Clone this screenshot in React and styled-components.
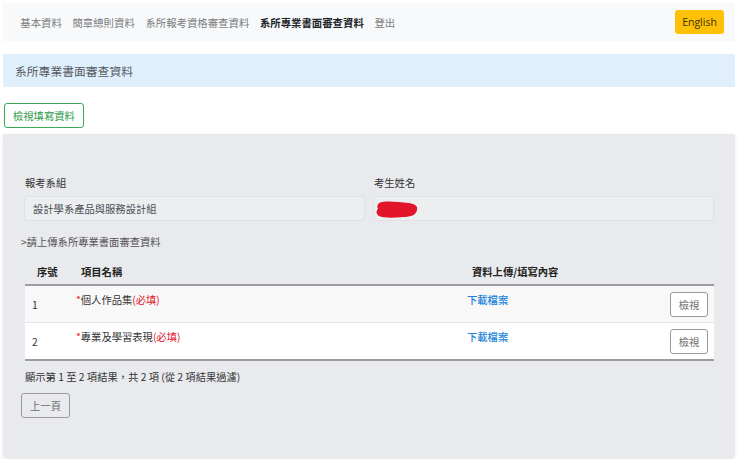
import React from 'react';
import styled, { createGlobalStyle } from 'styled-components';

const GlobalStyle = createGlobalStyle`
    body {
        margin: 0;
        background: #ffffff;
        font-family: 'Noto Sans CJK TC', 'Noto Sans', sans-serif;
        font-size: 10.5px;
        color: #333;
    }
`;

const rows = [
    { no: 1, name: '個人作品集' },
    { no: 2, name: '專業及學習表現' },
];

const navItems = ['基本資料', '簡章總則資料', '系所報考資格審查資料', '系所專業書面審查資料', '登出'];

const App = () => {
    return (
        <Page>
            <GlobalStyle />
            <NavBar>
                <NavLinks>
                    {navItems.map((item, i) => (
                        <NavLink key={item} active={i === 3}>
                            {item}
                        </NavLink>
                    ))}
                </NavLinks>
                <LangBtn>English</LangBtn>
            </NavBar>

            <Alert>系所專業書面審查資料</Alert>

            <OutlineBtn>檢視填寫資料</OutlineBtn>

            <Card>
                <FieldRow>
                    <Field>
                        <Label>報考系組</Label>
                        <ReadOnly>設計學系產品與服務設計組</ReadOnly>
                    </Field>
                    <Field>
                        <Label>考生姓名</Label>
                        <ReadOnly>
                            <svg width="44" height="22" viewBox="0 0 44 22">
                                <path
                                    d="M4 4 C10 1 22 3 34 4 C40 5 43 7 42 11 C41 16 36 18 28 18 C18 19 8 19 4 17 C1 15 1 12 3 10 C2 8 2 6 4 4 Z"
                                    fill="#e3152b"
                                />
                            </svg>
                        </ReadOnly>
                    </Field>
                </FieldRow>

                <Hint>&gt;請上傳系所專業書面審查資料</Hint>

                <Table>
                    <colgroup>
                        <col style={{ width: 44 }} />
                        <col style={{ width: 391 }} />
                        <col style={{ width: 177 }} />
                        <col />
                    </colgroup>
                    <thead>
                        <tr>
                            <Th>序號</Th>
                            <Th>項目名稱</Th>
                            <Th>資料上傳/填寫內容</Th>
                            <Th />
                        </tr>
                    </thead>
                    <tbody>
                        {rows.map((r, i) => (
                            <Tr key={r.no} odd={i % 2 === 0}>
                                <Td>{r.no}</Td>
                                <Td>
                                    <TopText>
                                        <Star>*</Star>
                                        {r.name}
                                        <Required>(必填)</Required>
                                    </TopText>
                                </Td>
                                <Td>
                                    <TopText>
                                        <DownloadLink>下載檔案</DownloadLink>
                                    </TopText>
                                </Td>
                                <Td right>
                                    <SmallBtn>檢視</SmallBtn>
                                </Td>
                            </Tr>
                        ))}
                    </tbody>
                </Table>

                <Summary>顯示第 1 至 2 項結果，共 2 項 (從 2 項結果過濾)</Summary>
                <PageBtn>上一頁</PageBtn>
            </Card>
        </Page>
    );
};

const Page = styled.div`
    padding: 3px 5px 0 3px;
    display: flex;
    flex-direction: column;
    align-items: flex-start;
`;

const NavBar = styled.div`
    width: 100%;
    box-sizing: border-box;
    height: 38px;
    background: #f8f9fa;
    display: flex;
    align-items: center;
    justify-content: space-between;
    padding: 0 11px 0 12px;
`;

const NavLinks = styled.div`
    display: flex;
    align-items: center;
`;

const NavLink = styled.span`
    padding: 0 5.3px;
    font-size: 10.4px;
    color: ${p => (p.active ? '#212529' : '#7a7d80')};
    font-weight: ${p => (p.active ? 700 : 400)};
`;

const LangBtn = styled.button`
    height: 24px;
    width: 49px;
    padding: 0;
    border: none;
    border-radius: 3px;
    background: #ffc107;
    color: #3a3200;
    font-family: 'Open Sans', 'Noto Sans', sans-serif;
    font-size: 10.5px;
`;

const Alert = styled.div`
    margin-top: 13px;
    width: 100%;
    box-sizing: border-box;
    height: 33px;
    background: #e0effc;
    display: flex;
    align-items: center;
    padding-left: 12px;
    font-size: 11.8px;
    color: #555a60;
`;

const OutlineBtn = styled.button`
    margin-top: 16px;
    margin-left: 1px;
    height: 25px;
    padding: 0 8px;
    background: #ffffff;
    border: 1px solid #3aa856;
    border-radius: 3px;
    color: #2f9a4c;
    font-family: inherit;
    font-size: 10.3px;
`;

const Card = styled.div`
    margin-top: 6px;
    width: 100%;
    box-sizing: border-box;
    height: 325px;
    background: #e9eaed;
    border-radius: 0 0 5px 5px;
    box-shadow: 0 2px 4px rgba(0, 0, 0, 0.08);
    padding: 42px 21px 0 21px;
    display: flex;
    flex-direction: column;
    align-items: flex-start;
`;

const FieldRow = styled.div`
    width: 100%;
    display: grid;
    grid-template-columns: 1fr 1fr;
    gap: 8px;
`;

const Field = styled.div`
    display: flex;
    flex-direction: column;
`;

const Label = styled.div`
    font-size: 10.3px;
    color: #333;
    margin-left: 1px;
    line-height: 14px;
    margin-bottom: 6px;
`;

const ReadOnly = styled.div`
    height: 25px;
    box-sizing: border-box;
    border: 1px solid #dfe1e4;
    border-radius: 3px;
    background: #eceef0;
    display: flex;
    align-items: center;
    padding-left: 8px;
    font-size: 10.3px;
    color: #495057;
    svg {
        margin-left: -7px;
        margin-top: 2px;
    }
`;

const Hint = styled.div`
    margin-top: 14px;
    margin-left: -3px;
    font-size: 10.3px;
    color: #555;
    line-height: 14px;
`;

const Table = styled.table`
    margin-top: 10px;
    margin-left: 1px;
    width: 689px;
    border-collapse: collapse;
    table-layout: fixed;
    border-bottom: 2px solid #9c9c9c;
`;

const Th = styled.th`
    height: 25px;
    padding: 0 0 0 12px;
    text-align: left;
    font-size: 10.3px;
    font-weight: 700;
    color: #222;
    border-bottom: 2px solid #9c9c9c;
`;

const Tr = styled.tr`
    background: ${p => (p.odd ? '#f8f8f8' : '#ffffff')};
    border-top: 1px solid #e4e4e4;
`;

const Td = styled.td`
    height: 36px;
    padding: 0 ${p => (p.right ? '6px' : '0')} 0 ${p => (p.right ? '0' : '7px')};
    text-align: ${p => (p.right ? 'right' : 'left')};
    vertical-align: middle;
    font-size: 10.3px;
    color: #333;
`;

const TopText = styled.div`
    margin-bottom: 10px;
`;

const Star = styled.span`
    color: #e3152b;
`;

const Required = styled.span`
    color: #e3152b;
`;

const DownloadLink = styled.a`
    color: #1e84dc;
    font-weight: 500;
    cursor: pointer;
`;

const SmallBtn = styled.button`
    width: 38px;
    height: 25px;
    padding: 0;
    background: #ffffff;
    border: 1px solid #9a9a9a;
    border-radius: 3px;
    color: #6c6c6c;
    font-family: inherit;
    font-size: 10.3px;
`;

const Summary = styled.div`
    margin-top: 9px;
    margin-left: 1px;
    font-size: 10.3px;
    color: #333;
    line-height: 14px;
`;

const PageBtn = styled.button`
    margin-top: 9px;
    margin-left: -3px;
    width: 49px;
    height: 25px;
    padding: 0;
    background: transparent;
    border: 1px solid #9a9a9a;
    border-radius: 3px;
    color: #6c6c6c;
    font-family: inherit;
    font-size: 10.3px;
`;

export default App;
